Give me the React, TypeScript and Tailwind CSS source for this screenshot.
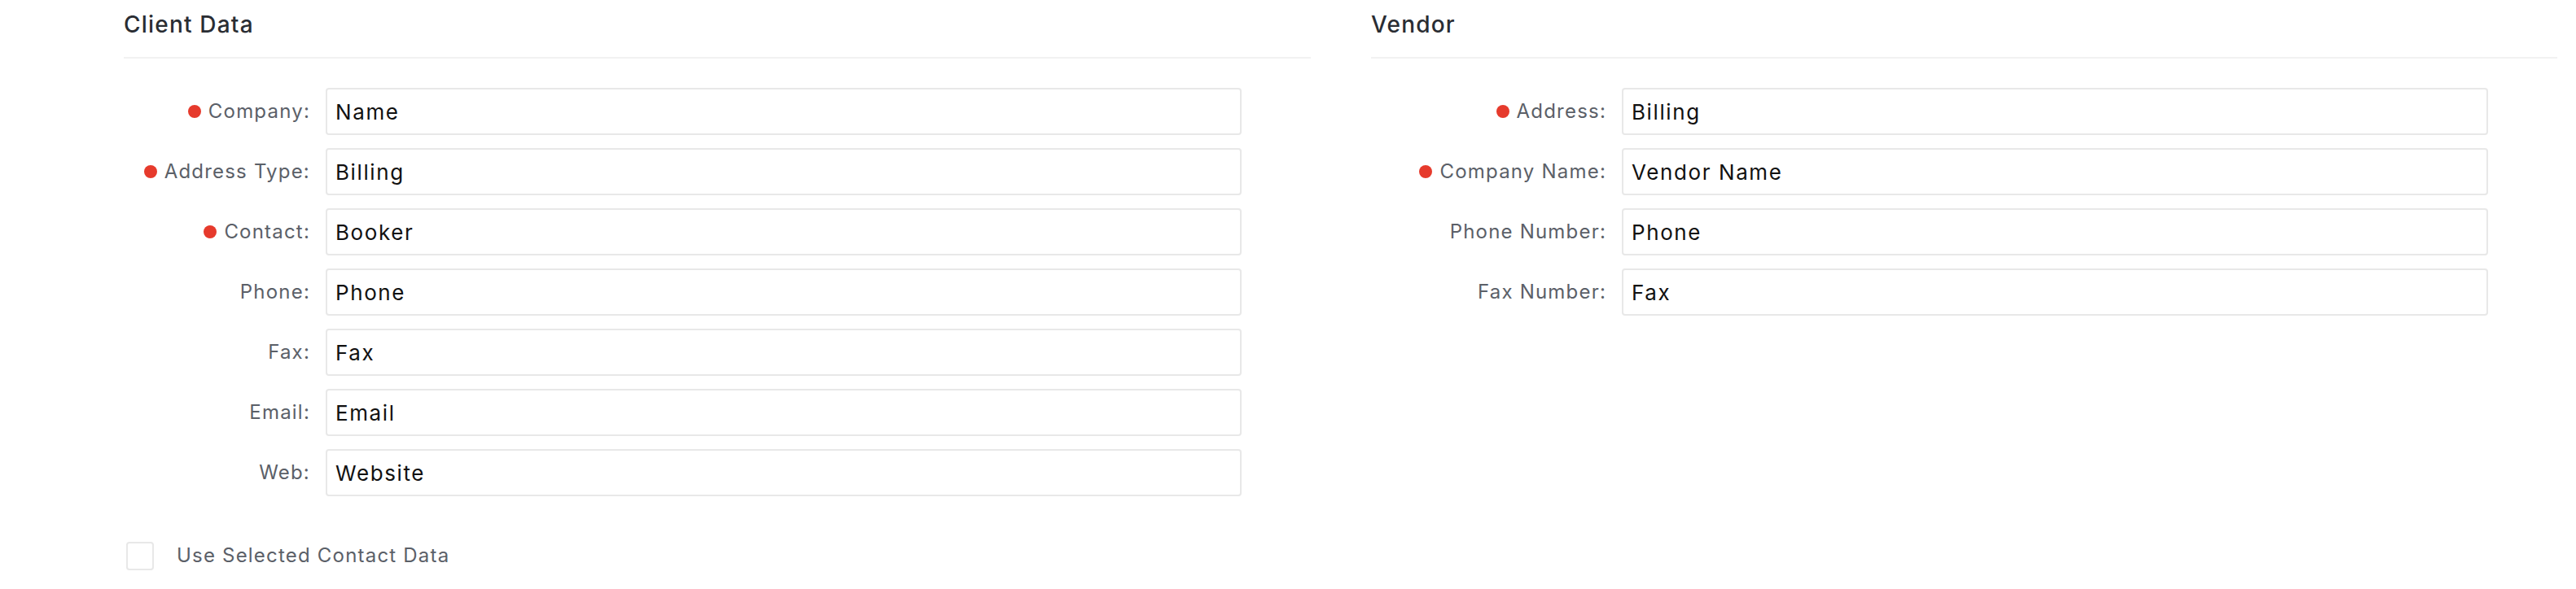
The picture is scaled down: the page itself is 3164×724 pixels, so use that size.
import React from "react";

type Field = {
  label: string;
  value: string;
  required?: boolean;
};

const clientFields: Field[] = [
  { label: "Company:", value: "Name", required: true },
  { label: "Address Type:", value: "Billing", required: true },
  { label: "Contact:", value: "Booker", required: true },
  { label: "Phone:", value: "Phone" },
  { label: "Fax:", value: "Fax" },
  { label: "Email:", value: "Email" },
  { label: "Web:", value: "Website" },
];

const vendorFields: Field[] = [
  { label: "Address:", value: "Billing", required: true },
  { label: "Company Name:", value: "Vendor Name", required: true },
  { label: "Phone Number:", value: "Phone" },
  { label: "Fax Number:", value: "Fax" },
];

const FieldRow = ({ field, labelWidth }: { field: Field; labelWidth: string }) => (
  <div className="flex items-center gap-[19px]">
    <label
      className={`${labelWidth} flex shrink-0 items-center justify-end text-[24px] tracking-[1.2px] text-[#5b6068]`}
    >
      {field.required && <span className="mr-[9px] h-[16px] w-[16px] rounded-full bg-[#e63a2c]" />}
      {field.label}
    </label>
    <input
      readOnly
      value={field.value}
      className="h-[58px] flex-1 rounded-[4px] border-2 border-[#e8e8e8] bg-white px-[10px] text-[26px] tracking-[1.6px] text-[#111] outline-none"
    />
  </div>
);

const Section = ({
  title,
  fields,
  labelWidth,
  className,
  children,
}: {
  title: string;
  fields: Field[];
  labelWidth: string;
  className?: string;
  children?: React.ReactNode;
}) => (
  <section className={className}>
    <h2 className="border-b-2 border-[#f2f2f2] pt-[13px] pb-[23px] text-[28px] leading-[34px] font-medium tracking-[1.2px] text-[#2a2d33]">
      {title}
    </h2>
    <div className="flex flex-col gap-[16px] pt-[36px] pr-[85px]">
      {fields.map((field, idx) => (
        <FieldRow key={idx} field={field} labelWidth={labelWidth} />
      ))}
    </div>
    {children}
  </section>
);

const App = () => {
  return (
    <div className="flex h-[724px] w-[3164px] bg-white font-['Inter',sans-serif]">
      {/* Client side */}
      <Section title="Client Data" fields={clientFields} labelWidth="w-[229px]" className="ml-[152px] w-[1458px]">
        <div className="mt-[55px] ml-[3px] flex items-center gap-[28px]">
          <span className="h-[35px] w-[34px] rounded-[4px] border-2 border-[#e8e8e8] bg-white" />
          <span className="text-[24px] tracking-[1.2px] text-[#5b6068]">Use Selected Contact Data</span>
        </div>
      </Section>

      {/* Vendor side */}
      <Section title="Vendor" fields={vendorFields} labelWidth="w-[289px]" className="ml-[74px] w-[1457px]" />
    </div>
  );
};

export default App;
